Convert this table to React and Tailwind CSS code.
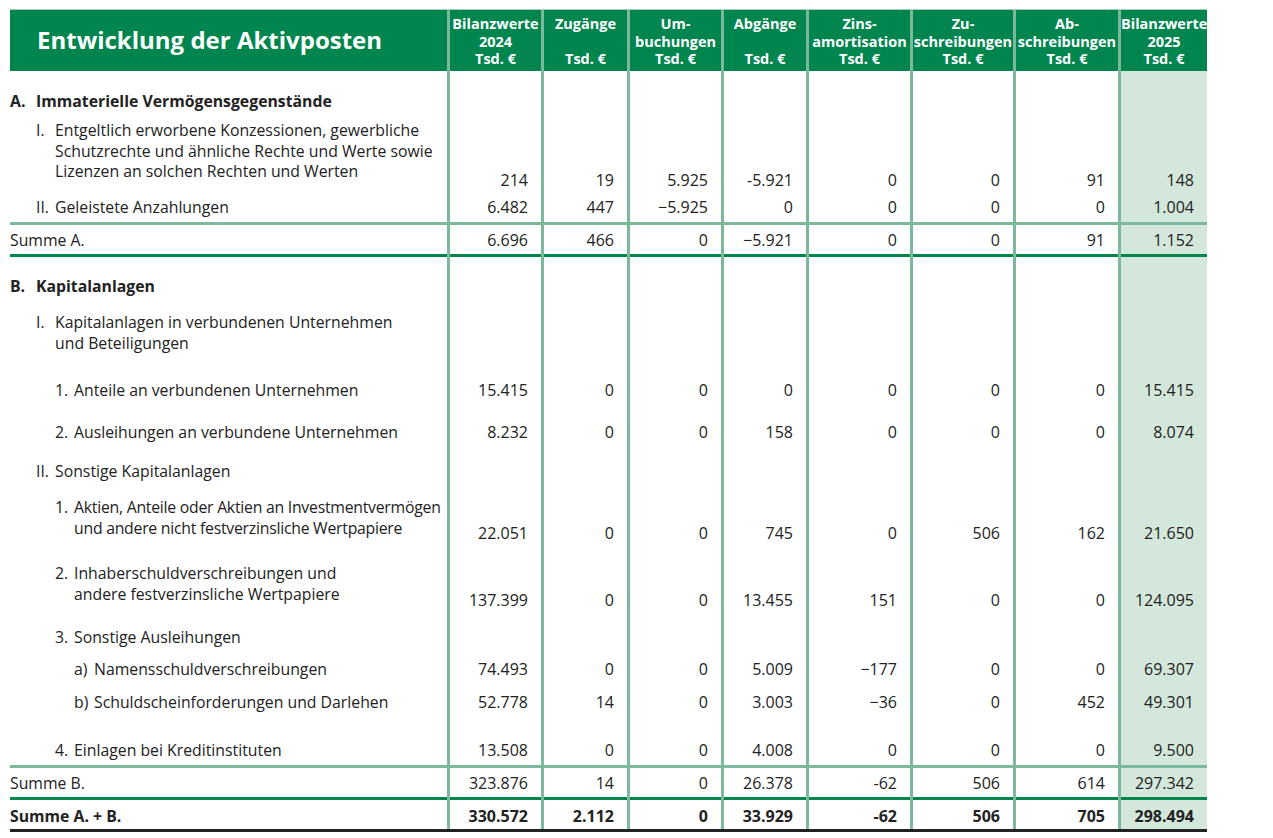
import React from 'react'

const COLS = 'grid grid-cols-[437px_94px_86px_94px_85px_104px_103px_105px_89px]'
const SEP = 'border-l-[3px] border-[#7bb89c]'

const heads = [
  ['Bilanzwerte', '2024', 'Tsd. €'],
  ['Zugänge', '', 'Tsd. €'],
  ['Um-', 'buchungen', 'Tsd. €'],
  ['Abgänge', '', 'Tsd. €'],
  ['Zins-', 'amortisation', 'Tsd. €'],
  ['Zu-', 'schreibungen', 'Tsd. €'],
  ['Ab-', 'schreibungen', 'Tsd. €'],
  ['Bilanzwerte', '2025', 'Tsd. €'],
]

// label helpers: marker + hanging text
const Item = ({ pad, mw, m, children, bold, tight }) => (
  <div className={`flex ${pad} ${bold ? 'font-bold' : ''}`}>
    <span className={`${mw} shrink-0`}>{m}</span>
    <span className={`whitespace-nowrap ${tight ? 'tracking-[-0.25px]' : ''}`}>{children}</span>
  </div>
)

const rows = [
  { h: 'h-[44px]', pt: 'pt-[20px]', npt: 'pt-[20px]', label: <Item pad="pl-0" mw="w-[26px]" m="A." bold>Immaterielle Vermögensgegenstände</Item> },
  { h: 'h-[76px]', pt: 'pt-[5px]', npt: 'pt-[55px]', label: <Item pad="pl-[26px]" mw="w-[19px]" m="I.">Entgeltlich erworbene Konzessionen, gewerbliche<br />Schutzrechte und ähnliche Rechte und Werte sowie<br />Lizenzen an solchen Rechten und Werten</Item>, nums: ['214', '19', '5.925', '-5.921', '0', '0', '91', '148'] },
  { h: 'h-[31px]', pt: 'pt-[6px]', npt: 'pt-[6px]', label: <Item pad="pl-[26px]" mw="w-[19px]" m="II.">Geleistete Anzahlungen</Item>, nums: ['6.482', '447', '−5.925', '0', '0', '0', '0', '1.004'] },
  { line: 'light' },
  { h: 'h-[29px]', pt: 'pt-[5px]', npt: 'pt-[5px]', label: <div>Summe A.</div>, nums: ['6.696', '466', '0', '−5.921', '0', '0', '91', '1.152'] },
  { line: 'dark' },
  { h: 'h-[45px]', pt: 'pt-[19px]', npt: 'pt-[19px]', label: <Item pad="pl-0" mw="w-[26px]" m="B." bold>Kapitalanlagen</Item> },
  { h: 'h-[66px]', pt: 'pt-[10px]', npt: 'pt-[10px]', label: <Item pad="pl-[26px]" mw="w-[19px]" m="I.">Kapitalanlagen in verbundenen Unternehmen<br />und Beteiligungen</Item> },
  { h: 'h-[44px]', pt: 'pt-[12px]', npt: 'pt-[12px]', label: <Item pad="pl-[45px]" mw="w-[19px]" m="1.">Anteile an verbundenen Unternehmen</Item>, nums: ['15.415', '0', '0', '0', '0', '0', '0', '15.415'] },
  { h: 'h-[40px]', pt: 'pt-[10px]', npt: 'pt-[10px]', label: <Item pad="pl-[45px]" mw="w-[19px]" m="2.">Ausleihungen an verbundene Unternehmen</Item>, nums: ['8.232', '0', '0', '158', '0', '0', '0', '8.074'] },
  { h: 'h-[38px]', pt: 'pt-[9px]', npt: 'pt-[9px]', label: <Item pad="pl-[26px]" mw="w-[19px]" m="II.">Sonstige Kapitalanlagen</Item> },
  { h: 'h-[66px]', pt: 'pt-[7px]', npt: 'pt-[33px]', label: <Item pad="pl-[45px]" mw="w-[19px]" m="1." tight>Aktien, Anteile oder Aktien an Investmentvermögen<br />und andere nicht festverzinsliche Wertpapiere</Item>, nums: ['22.051', '0', '0', '745', '0', '506', '162', '21.650'] },
  { h: 'h-[66px]', pt: 'pt-[7px]', npt: 'pt-[34px]', label: <Item pad="pl-[45px]" mw="w-[19px]" m="2.">Inhaberschuldverschreibungen und<br />andere festverzinsliche Wertpapiere</Item>, nums: ['137.399', '0', '0', '13.455', '151', '0', '0', '124.095'] },
  { h: 'h-[32px]', pt: 'pt-[5px]', npt: 'pt-[5px]', label: <Item pad="pl-[45px]" mw="w-[19px]" m="3.">Sonstige Ausleihungen</Item> },
  { h: 'h-[32px]', pt: 'pt-[5px]', npt: 'pt-[5px]', label: <Item pad="pl-[64px]" mw="w-[20px]" m="a)">Namensschuldverschreibungen</Item>, nums: ['74.493', '0', '0', '5.009', '−177', '0', '0', '69.307'] },
  { h: 'h-[34px]', pt: 'pt-[6px]', npt: 'pt-[6px]', label: <Item pad="pl-[64px]" mw="w-[20px]" m="b)">Schuldscheinforderungen und Darlehen</Item>, nums: ['52.778', '14', '0', '3.003', '−36', '0', '452', '49.301'] },
  { h: 'h-[45px]', pt: 'pt-[20px]', npt: 'pt-[20px]', label: <Item pad="pl-[45px]" mw="w-[19px]" m="4.">Einlagen bei Kreditinstituten</Item>, nums: ['13.508', '0', '0', '4.008', '0', '0', '0', '9.500'] },
  { line: 'light' },
  { h: 'h-[29px]', pt: 'pt-[5px]', npt: 'pt-[5px]', label: <div>Summe B.</div>, nums: ['323.876', '14', '0', '26.378', '-62', '506', '614', '297.342'] },
  { line: 'dark' },
  { h: 'h-[29px]', pt: 'pt-[6px]', npt: 'pt-[6px]', bold: true, label: <div>Summe A. + B.</div>, nums: ['330.572', '2.112', '0', '33.929', '-62', '506', '705', '298.494'] },
]

function Line({ kind }) {
  const bg = kind === 'dark' ? 'bg-[#00854f]' : 'bg-[#7bb89c]'
  return (
    <div className={`${COLS} h-[3px]`}>
      <div className={bg} />
      {Array.from({ length: 8 }).map((_, i) => (
        <div key={i} className={`${bg} ${SEP}`} />
      ))}
    </div>
  )
}

function Row({ r }) {
  const nums = r.nums || Array(8).fill('')
  return (
    <div className={`${COLS} ${r.h} ${r.bold ? 'font-bold' : ''}`}>
      <div className={`${r.pt} leading-[20.5px] text-[15.8px]`}>{r.label}</div>
      {nums.map((n, i) => (
        <div key={i} className={`${SEP} ${r.npt} pr-[13px] text-right leading-[20px] text-[16px] ${i === 7 ? 'bg-[#d3e7db]' : ''}`}>
          {n}
        </div>
      ))}
    </div>
  )
}

export default function App() {
  return (
    <div className="min-h-screen bg-white pt-[9px] pl-[10px] text-[#222] font-['Open_Sans',sans-serif]">
      <div className="w-[1197px]">
        <div className="h-px bg-[#a9ccb9]" />
        <div className={`${COLS} h-[61px] bg-[#00854f] text-white`}>
          <div className="flex items-center pl-[27px] pb-[2px] text-[24px] font-bold">Entwicklung der Aktivposten</div>
          {heads.map((h, i) => (
            <div key={i} className={`${SEP} pt-[5px] text-center text-[14.5px] font-bold leading-[17.5px] whitespace-nowrap`}>
              <div>{h[0]}</div>
              <div className="h-[17.5px]">{h[1]}</div>
              <div>{h[2]}</div>
            </div>
          ))}
        </div>
        {rows.map((r, i) => (r.line ? <Line key={i} kind={r.line} /> : <Row key={i} r={r} />))}
        <div className="h-[3px] bg-[#222]" />
      </div>
    </div>
  )
}
